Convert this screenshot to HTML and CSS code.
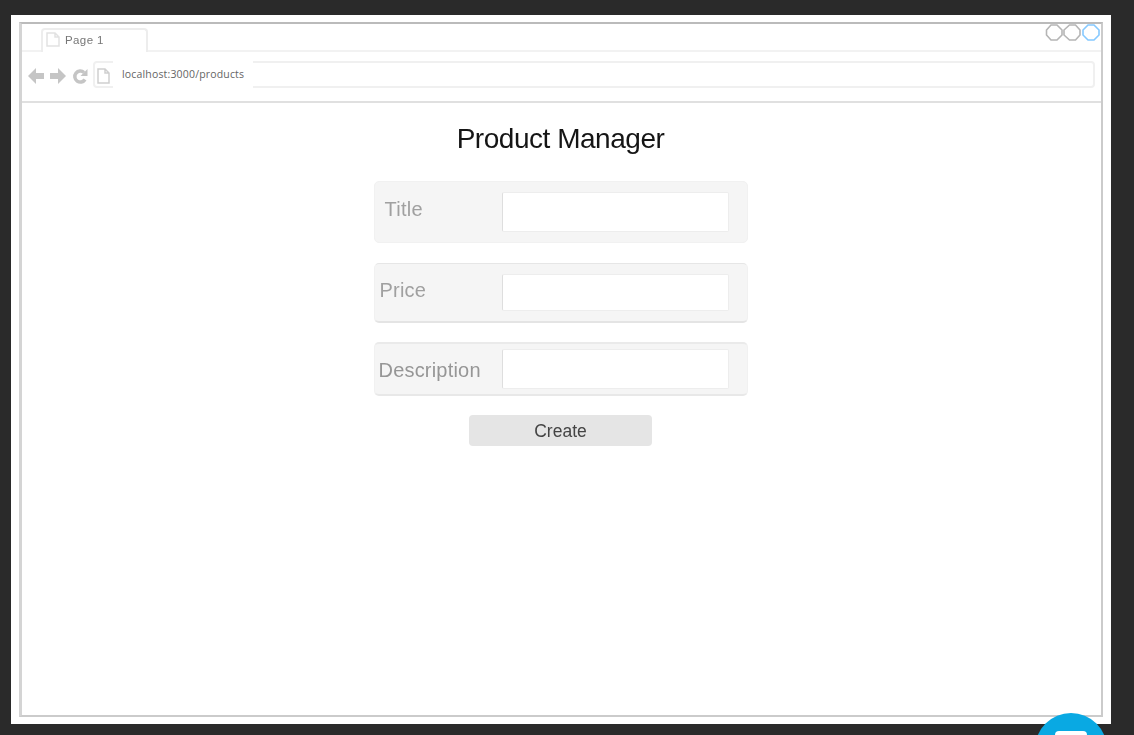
FILE: index.html
```
<!DOCTYPE html>
<html lang="en">
<head>
<meta charset="utf-8">
<title>Product Manager</title>
<link rel="stylesheet" href="styles.css">
</head>
<body>
<main class="sheet">
  <div class="browser">
    <div class="tabs">
      <div class="tab">
        <svg class="tab-icon soft" width="14" height="15" viewBox="0 0 14 15"><path d="M1 1H9L13 5V14H1ZM9 1V5H13"/></svg>
        <span class="soft">Page 1</span>
      </div>
      <svg class="controls soft" width="56" height="20" viewBox="0 0 56 20">
        <path d="M6 2H12L17 7V12L12 17H6L1.500 12V7Z"/>
        <path d="M24.500 2H30.500L35 7V12L30.500 17H24.500L19 12V7Z"/>
        <path class="active" d="M43 2H49L54 7V12L49 17H43L38 12V7Z"/>
      </svg>
    </div>
    <div class="toolbar">
      <svg class="nav soft" width="62" height="18" viewBox="0 0 62 18">
        <path d="M0 9L8 1V6H16V12H8V17Z"/>
        <path d="M38 9L30 1V6H22V12H30V17Z"/>
        <path class="reload" d="M56 5.500A5.500 5.500 0 1 0 57 12.500"/>
        <path d="M59.500 2V9H52.500Z"/>
      </svg>
      <div class="address">
        <svg class="page-icon soft" width="13" height="16" viewBox="0 0 13 16"><path d="M1 1H8L12 5V15H1ZM8 1V5H12"/></svg>
        <span class="url">localhost:3000/products</span>
      </div>
    </div>
    <section class="content">
      <h1 class="soft">Product Manager</h1>
      <form class="form">
        <label class="row title"><span class="soft">Title</span><input type="text"></label>
        <label class="row price"><span class="soft">Price</span><input type="text"></label>
        <label class="row description"><span class="soft">Description</span><input type="text"></label>
        <button class="create" type="button"><span class="soft">Create</span></button>
      </form>
    </section>
  </div>
</main>
<svg class="chat" width="72" height="22" viewBox="0 0 72 22">
  <circle cx="36" cy="36" r="36"/>
  <rect x="20" y="18" width="32" height="26" rx="4"/>
</svg>
</body>
</html>
```
FILE: styles.css
```
* { box-sizing: border-box; }
html, body { height: 100%; overflow: hidden; }
body {
  margin: 0;
  padding: 15px 23px 11px 11px;
  background: #2a2a2a;
  font-family: "Liberation Sans", Arial, sans-serif;
}
.sheet {
  height: 709px;
  padding: 7px 8px;
  background: #fff;
}
.browser {
  height: 695px;
  border: 2px solid #cbcbcb;
  border-top-color: #bbb;
  border-left: 3px solid #d4d4d4;
}
.soft { filter: blur(0.5px); }
.tabs {
  display: flex;
  justify-content: space-between;
  height: 28px;
  padding: 4px 0 0 19px;
  border-bottom: 2px solid #f2f2f2;
}
.tab {
  display: flex;
  align-items: center;
  gap: 5px;
  width: 107px;
  height: 24px;
  padding: 0 0 3px 3px;
  border: 2px solid #ededed;
  border-bottom: 0;
  border-radius: 4px 4px 0 0;
  background: #fff;
  color: #777;
  font-size: 11.5px;
  letter-spacing: 0.4px;
}
.tab-icon, .page-icon { fill: none; stroke: #e2e2e2; stroke-width: 1.5; }
.controls {
  margin-top: -5px;
  fill: none;
  stroke: #b5b5b5;
  stroke-width: 1.6;
}
.controls .active { stroke: #85c9ff; }
.toolbar {
  display: flex;
  gap: 3px;
  height: 51px;
  padding: 9px 6px 0 6px;
  border-bottom: 2px solid #e0e0e0;
}
.nav { flex: none; margin-top: 6px; fill: #c5c5c5; }
.nav .reload { fill: none; stroke: #c5c5c5; stroke-width: 3.5; }
.address {
  display: flex;
  flex: 1;
  height: 27px;
  padding-left: 2px;
  border: 2px solid #f0f0f0;
  border-radius: 4px;
}
.page-icon { flex: none; margin-top: 5px; stroke: #cfcfcf; }
.url {
  width: 140px;
  height: 27px;
  margin: -2px 0 0 3px;
  padding-left: 9px;
  background: #fff;
  color: #656565;
  font: 10.5px/27px "Open Sans", sans-serif;
  letter-spacing: 0.17px;
}
.content {
  display: flex;
  flex-direction: column;
  align-items: center;
  padding-right: 2px;
}
h1 {
  margin: 18px 0 0;
  color: #151515;
  font-size: 28px;
  font-weight: 400;
  line-height: 36px;
  letter-spacing: -0.47px;
  white-space: nowrap;
}
.form {
  display: flex;
  flex-direction: column;
  align-items: center;
  width: 374px;
  margin-top: 24px;
}
.row {
  display: flex;
  justify-content: space-between;
  width: 374px;
  padding-right: 18px;
  border: 1px solid #f1f1f1;
  border-radius: 5px;
  background: #f5f5f5;
  color: #a0a0a0;
  font-size: 20px;
  line-height: 24px;
}
.row input {
  width: 227px;
  padding: 0 8px;
  border: 1px solid #ededed;
  border-left-color: #dedede;
  border-radius: 2px;
  background: #fff;
  font: inherit;
}
.title { height: 62px; padding-top: 10px; padding-left: 10px; }
.title span { margin-top: 5px; letter-spacing: 0.3px; }
.title input { height: 40px; }
.price {
  height: 60px;
  margin-top: 20px;
  padding-top: 10px;
  padding-left: 5px;
  border-top-color: #e6e6e6;
  border-bottom: 2px solid #e4e4e4;
}
.price span { margin-top: 4px; letter-spacing: 0.2px; }
.price input { height: 37px; }
.description {
  height: 54px;
  margin-top: 19px;
  padding-top: 5px;
  padding-left: 4px;
  border-top: 2px solid #eaeaea;
  border-bottom: 2px solid #e8e8e8;
}
.description span { margin-top: 9px; letter-spacing: 0.2px; color: #969696; }
.description input { height: 40px; }
.create {
  width: 183px;
  height: 31px;
  margin-top: 19px;
  padding: 0;
  border: 0;
  border-radius: 4px;
  background: #e5e5e5;
  color: #444;
  font: 17.5px/32px "Liberation Sans", Arial, sans-serif;
}
.create span { display: block; }
.chat {
  position: absolute;
  bottom: 0;
  left: 1035px;
  fill: #09a9e3;
}
.chat rect { fill: #fff; }
```
